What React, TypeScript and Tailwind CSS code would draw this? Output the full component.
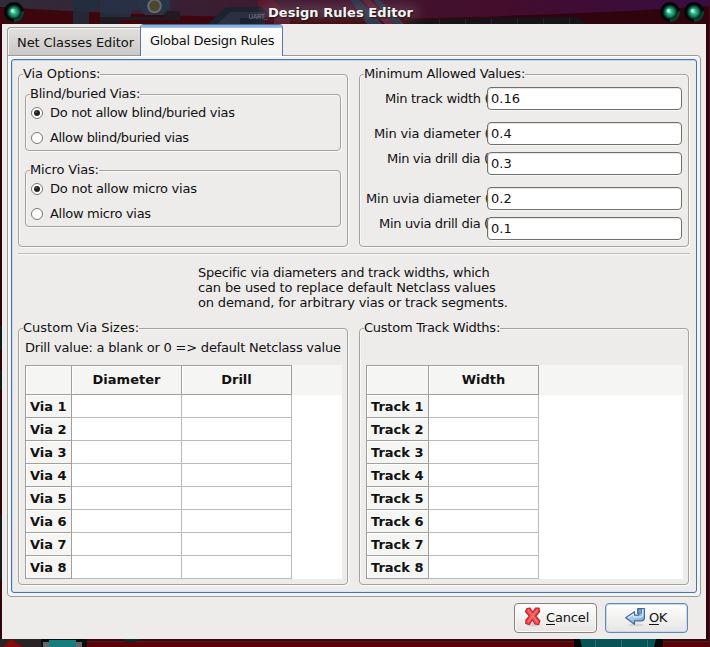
import type { ReactNode } from "react";

function Backdrop() {
  return (
    <svg className="absolute inset-0" width="710" height="647" viewBox="0 0 710 647">
      <defs>
        <linearGradient id="sheen" x1="0" x2="1" y1="0" y2="0">
          <stop offset="0" stopColor="#302b39" />
          <stop offset="0.35" stopColor="#3d1b31" />
          <stop offset="0.7" stopColor="#430d2b" />
          <stop offset="1" stopColor="#380d42" />
        </linearGradient>
        <filter id="soft" x="-20%" y="-80%" width="140%" height="260%">
          <feGaussianBlur stdDeviation="6" />
        </filter>
      </defs>
      <rect width="710" height="647" fill="#30030d" />
      <rect y="8" width="500" height="16" fill="#3c060c" />
      <path d="M0 0H710V6Q590 14 430 18Q200 20 0 7Z" fill="url(#sheen)" />
      <path d="M73 0H98V10H89V24H73V6Z" fill="#1e3140" opacity="0.8" />
      <path d="M100 0H139V10H131V17H100Z" fill="#253246" opacity="0.85" />
      <path d="M100 17H164V11H180V20H120V24H100Z" fill="#201b20" />
      <path d="M138 0H170V8L163 15H145L138 7Z" fill="#273346" />
      <circle cx="154.500" cy="6" r="6.500" fill="#5b5960" stroke="#6d6b70" strokeWidth="1.500" />
      <circle cx="154.500" cy="6" r="5" fill="#4a482c" />
      <path d="M208 24L226 7H265V24Z" fill="#1d222f" />
      <path d="M217 24L230 12H265V18H240V24Z" fill="#2a3042" />
      <path d="M258 0H273L290 18V24H274V17L258 5Z" fill="#54182a" />
      <path d="M350 0H360L382 24H367Z" fill="#283248" />
      <path d="M362 0H370L394 24H385Z" fill="#5c2036" />
      <path d="M373 0H380L404 24H394Z" fill="#283248" />
      <path d="M410 20Q500 17 577 17L585 22V24H405Z" fill="#181319" />
      <path d="M439.500 19V24M465.500 19V24M491.500 18V24M517.500 18V24M543.500 18V24M569.500 18V24" stroke="#2a2329" />
      <rect x="262" y="5" width="156" height="15" rx="7" fill="#94727f" opacity="0.35" filter="url(#soft)" />
      <text x="248.500" y="18.500" className="font-['Roboto'] text-[7px] tracking-[-0.3px]" fill="#77727e">
        UART_
      </text>

      <rect y="639" width="710" height="8" fill="#5b0306" />
      <rect y="639" width="710" height="3" fill="#35080d" />
      <rect y="641" width="710" height="1" fill="#4a2024" />
      <rect y="639" width="41" height="8" fill="#292326" />
      <path d="M3 647L11 639L23 647Z" fill="#870909" />
      <rect x="41" y="639" width="46" height="8" fill="#080c0d" />
      <rect x="43" y="642" width="39" height="5" fill="#62666a" />
      <rect x="49" y="640" width="27" height="7" fill="#167d7d" />
      <path d="M122 639H140L135 642H127Z" fill="#09282a" />
      <rect x="574" y="639" width="89" height="8" fill="#060707" />
      <path d="M580 639H656L654 647H582Z" fill="#075457" />
      <path d="M595.500 640V647M621.500 640V647M647.500 640V647" stroke="#287174" />
      <path d="M0 326H2V350H0ZM0 370H2V390H0Z" fill="#111c22" />
      <path d="M0 515H2V580H0Z" fill="#151b20" />
      <path d="M709.500 0V647" stroke="#480e18" />
    </svg>
  );
}

function Orb({ id }: { id: string }) {
  return (
    <svg width="20" height="20" viewBox="0 0 20 20">
      <defs>
        <radialGradient id={id} cx="0.5" cy="0.5" r="0.5">
          <stop offset="0" stopColor="#4fdca6" />
          <stop offset="0.3" stopColor="#2bb284" />
          <stop offset="0.6" stopColor="#1a8463" />
          <stop offset="0.85" stopColor="#0a3b2d" />
          <stop offset="1" stopColor="#04120d" />
        </radialGradient>
      </defs>
      <circle cx="10" cy="10" r="10" fill="#020807" />
      <path d="M10 20A10 10 0 0 0 20 9L17 10L10 17Z" fill="#0a4031" />
      <circle cx="10" cy="10" r="7.300" fill={`url(#${id})`} />
      <circle cx="8.800" cy="9" r="2.400" fill="#7ff3c2" opacity="0.7" />
      <circle cx="8.500" cy="8.800" r="1.300" fill="#ccffe6" />
    </svg>
  );
}

function Group({
  title,
  titleClass = "",
  className,
  children,
}: {
  title: string;
  titleClass?: string;
  className: string;
  children?: ReactNode;
}) {
  return (
    <section className={`rounded-[4px] border border-[#a3a29f] shadow-[1px_1px_0_#fafaf9,inset_1px_1px_0_#f8f8f7] ${className}`}>
      <h2 className={`-mt-[9px] ml-1 h-[15px] w-fit bg-[#edeceb] whitespace-nowrap ${titleClass}`}>{title}</h2>
      {children}
    </section>
  );
}

function Radio({ label, checked, labelClass }: { label: string; checked?: boolean; labelClass: string }) {
  return (
    <label className="flex h-[15px] items-center gap-[7px]">
      <svg width="12" height="12" viewBox="0 0 12 12">
        <circle cx="6" cy="6" r="5.500" fill="#fff" stroke="#767674" />
        {checked && <circle cx="6" cy="6" r="3" fill="#202123" />}
        {checked && <circle cx="5.200" cy="5" r="0.800" fill="#777" />}
      </svg>
      <span className={`whitespace-nowrap ${labelClass}`}>{label}</span>
    </label>
  );
}

function Field({ label, value, className, labelClass }: { label: string; value: string; className: string; labelClass: string }) {
  return (
    <div className={`flex h-[23px] ${className}`}>
      <span className={`h-[15px] w-[127px] whitespace-nowrap ${labelClass}`}>{label}</span>
      <input
        readOnly
        value={value}
        className="relative h-[23px] w-[195px] rounded-[4px] border border-[#6f6f6c] bg-white pt-0 pr-1 pl-[3px] leading-[15px] shadow-[inset_1px_1px_0_#e5e5e4,0_1px_0_#f8f8f7] outline-none"
      />
    </div>
  );
}

function Grid({ name, columns, headWidth }: { name: string; columns: string[]; headWidth: string }) {
  return (
    <div className="bg-white">
      <div className="flex h-[30px] bg-[#f5f5f3] font-bold">
        <div className={`border border-[#a1a09e] shadow-[inset_1px_1px_0_#fff] ${headWidth}`} />
        {columns.map((c) => (
          <div
            key={c}
            className="w-[110px] border-y border-r border-[#a1a09e] pt-1.5 text-center shadow-[inset_1px_1px_0_#fff]"
          >
            {c}
          </div>
        ))}
      </div>
      {[1, 2, 3, 4, 5, 6, 7, 8].map((n) => (
        <div key={n} className="flex h-[23px]">
          <div
            className={`border-x border-b border-[#a1a09e] bg-[#f5f5f3] pt-1 pl-1 font-bold whitespace-nowrap shadow-[inset_1px_1px_0_#fff] ${headWidth}`}
          >
            {name} {n}
          </div>
          {columns.map((c) => (
            <div key={c} className="w-[110px] border-r border-b border-[#bbbbb9]" />
          ))}
        </div>
      ))}
    </div>
  );
}

function CancelIcon() {
  return (
    <svg width="18" height="20" viewBox="0 0 18 20">
      <ellipse cx="9" cy="17.800" rx="7" ry="1.800" fill="#cfcfcd" />
      <path
        d="M3 1.500L6 1L8.700 5.500L11.500 1.200L15 1.200L15.500 4.500L11.700 9.200L15.800 14L14.500 17.500L11 17L8.500 13L5.200 17.500L1.800 16.500L2 13L5.500 9.200L1.500 4.500Z"
        fill="#f05053"
        stroke="#c51b27"
        strokeWidth="1.200"
        strokeLinejoin="round"
      />
      <path d="M4 3L8.500 8.500L13.500 3M8.500 8.500L4 15M9 9L13.500 15.500" stroke="#ff8a85" strokeWidth="1" fill="none" />
    </svg>
  );
}

function OkIcon() {
  return (
    <svg width="20" height="20" viewBox="0 0 20 20">
      <defs>
        <linearGradient id="arrow" x1="0" x2="1" y1="0" y2="1">
          <stop offset="0" stopColor="#d9e9f7" />
          <stop offset="1" stopColor="#72a5d3" />
        </linearGradient>
      </defs>
      <ellipse cx="11" cy="18" rx="8" ry="1.500" fill="#d5d5d3" />
      <path
        d="M12.700 1.500H19.400V10.500Q19.400 13.800 16 13.800H9.500V17.300L0.700 10.700L9.500 4.700V8.200H13.700V6.500H12.700Z"
        fill="url(#arrow)"
        stroke="#3b6aa5"
        strokeWidth="1.200"
        strokeLinejoin="round"
      />
      <path d="M13.200 2H16.500V6.200H13.200Z" fill="#79a5cf" stroke="#41699b" strokeWidth="0.700" />
      <path d="M17.800 2.500V9Q17.800 10 14 10H8.500V7L3 10.500" stroke="#e7f2fa" fill="none" />
    </svg>
  );
}

export default function App() {
  return (
    <div className="relative h-[647px] w-[710px] overflow-hidden font-['DejaVu_Sans',sans-serif] text-[13px] leading-[15px] text-[#111]">
      <Backdrop />
      <div className="relative flex h-full flex-col">
        <header className="flex h-6 items-start pt-0.5 pl-1">
          <Orb id="orb-a" />
          <h1 className="mt-[3px] ml-[244px] w-[150px] font-bold tracking-[0.05px] whitespace-nowrap text-[#f4f4f4] [text-shadow:1px_1px_2px_#111]">
            Design Rules Editor
          </h1>
          <div className="ml-[242px] flex gap-1">
            <Orb id="orb-b" />
            <Orb id="orb-c" />
          </div>
        </header>

        <main className="ml-0.5 h-[615px] w-[704px] bg-[#edeceb] pl-[5px]">
          <nav className="relative z-10 flex h-8 items-start">
            <div className="mt-[3px] h-[29px] w-[133px] rounded-tl-[4px] border border-r-0 border-[#9c9b98] bg-linear-to-b from-[#e2e1df] to-[#cac9c7] pt-[7px] pl-[9px] tracking-[-0.09px] whitespace-nowrap shadow-[inset_1px_1px_0_#f5f5f4]">
              Net Classes Editor
            </div>
            <div className="h-8 w-[143px] overflow-hidden rounded-t-[4px] border border-b-0 border-[#5677a5] border-t-[#4a6d9d] bg-linear-to-b from-[#ffffff] to-[#f1f1f0]">
              <div className="h-[3px] bg-linear-to-b from-[#7ea5d9] to-[#a5c2e8]" />
              <div className="pt-[5px] pl-[9px] tracking-[-0.29px] whitespace-nowrap">Global Design Rules</div>
            </div>
          </nav>

          <div className="-mt-px h-[542px] w-[694px] rounded-[4px] rounded-tl-none border border-[#9c9b98] bg-[#f3f3f2] p-[3px] shadow-[inset_1px_1px_0_#fff]">
            <div className="h-[534px] w-[686px] rounded-[3px] border border-[#4774b0] bg-[#edeceb] px-1.5 pt-3.5 shadow-[inset_0_1px_0_#bfd5ef,inset_1px_0_0_#c9dcef,inset_0_-1px_0_#dbe6f2]">
              <div className="flex gap-[11px]">
                <Group title="Via Options:" titleClass="tracking-[-0.13px]" className="h-[173px] w-[330px]">
                  <div className="flex flex-col gap-[19px] px-1.5 pt-[13px]">
                    <Group title="Blind/buried Vias:" titleClass="tracking-[-0.23px]" className="h-[57px]">
                      <div className="flex flex-col gap-2.5 pt-1 pl-[5px]">
                        <Radio label="Do not allow blind/buried vias" labelClass="tracking-[-0.3px]" checked />
                        <Radio label="Allow blind/buried vias" labelClass="tracking-[-0.36px]" />
                      </div>
                    </Group>
                    <Group title="Micro Vias:" titleClass="tracking-[-0.15px]" className="h-[57px]">
                      <div className="flex flex-col gap-2.5 pt-1 pl-[5px]">
                        <Radio label="Do not allow micro vias" labelClass="tracking-[-0.23px]" checked />
                        <Radio label="Allow micro vias" labelClass="tracking-[-0.29px]" />
                      </div>
                    </Group>
                  </div>
                </Group>
                <Group title="Minimum Allowed Values:" titleClass="tracking-[-0.23px]" className="h-[173px] w-[330px]">
                  <div className="flex flex-col pt-1.5">
                    <Field label="Min track width (" value="0.16" className="" labelClass="mt-1 pl-[25px] tracking-[-0.3px]" />
                    <Field label="Min via diameter (" value="0.4" className="mt-3" labelClass="mt-1 pl-[14px] tracking-[-0.18px]" />
                    <Field label="Min via drill dia (" value="0.3" className="mt-[7px]" labelClass="-mt-px pl-[27px] tracking-[-0.34px]" />
                    <Field label="Min uvia diameter (" value="0.2" className="mt-3" labelClass="mt-1 pl-[6px] tracking-[-0.18px]" />
                    <Field label="Min uvia drill dia (" value="0.1" className="mt-[7px]" labelClass="-mt-px pl-[19px] tracking-[-0.33px]" />
                  </div>
                </Group>
              </div>

              <hr className="mt-1.5 h-0.5 border-t border-b border-t-[#bbbab8] border-b-[#fafafa]" />

              <div className="mt-2.5 ml-[180px] whitespace-nowrap">
                <p className="tracking-[-0.24px]">Specific via diameters and track widths, which</p>
                <p className="tracking-[-0.14px]">can be used to replace default Netclass values</p>
                <p className="tracking-[-0.16px]">on demand, for arbitrary vias or track segments.</p>
              </div>

              <div className="mt-[18px] flex gap-[11px]">
                <Group title="Custom Via Sizes:" className="h-[257px] w-[330px]">
                  <div className="pt-[5px] pl-1.5">
                    <p className="h-[25px] tracking-[-0.21px] whitespace-nowrap">
                      Drill value: a blank or 0 =&gt; default Netclass value
                    </p>
                    <div className="w-[317px]">
                      <Grid name="Via" columns={["Diameter", "Drill"]} headWidth="w-[47px]" />
                    </div>
                  </div>
                </Group>
                <Group title="Custom Track Widths:" titleClass="tracking-[-0.25px]" className="h-[257px] w-[330px]">
                  <div className="w-[323px] pt-[30px] pl-1.5">
                    <Grid name="Track" columns={["Width"]} headWidth="w-[63px]" />
                  </div>
                </Group>
              </div>
            </div>
          </div>

          <footer className="mt-1.5 mr-[18px] flex justify-end gap-2">
            <button className="flex h-[30px] w-[83px] items-start rounded-[4px] border border-[#858480] bg-linear-to-b from-[#ffffff] to-[#e6e5e3] pt-[3px] pl-[9px] shadow-[inset_0_0_0_1px_#fafafa]">
              <CancelIcon />
              <span className="ml-1 pt-[3px] tracking-[-0.15px] whitespace-nowrap">
                <span className="underline underline-offset-2">C</span>ancel
              </span>
            </button>
            <button className="flex h-[30px] w-[83px] items-start rounded-[4px] border border-[#6288b8] bg-linear-to-b from-[#ffffff] to-[#e6e5e3] pt-[3px] pl-[19px] shadow-[inset_0_0_0_1px_#c8d9eb]">
              <OkIcon />
              <span className="ml-1 pt-[3px] tracking-[-0.4px] whitespace-nowrap">
                <span className="underline underline-offset-2">O</span>K
              </span>
            </button>
          </footer>
        </main>
      </div>
    </div>
  );
}
